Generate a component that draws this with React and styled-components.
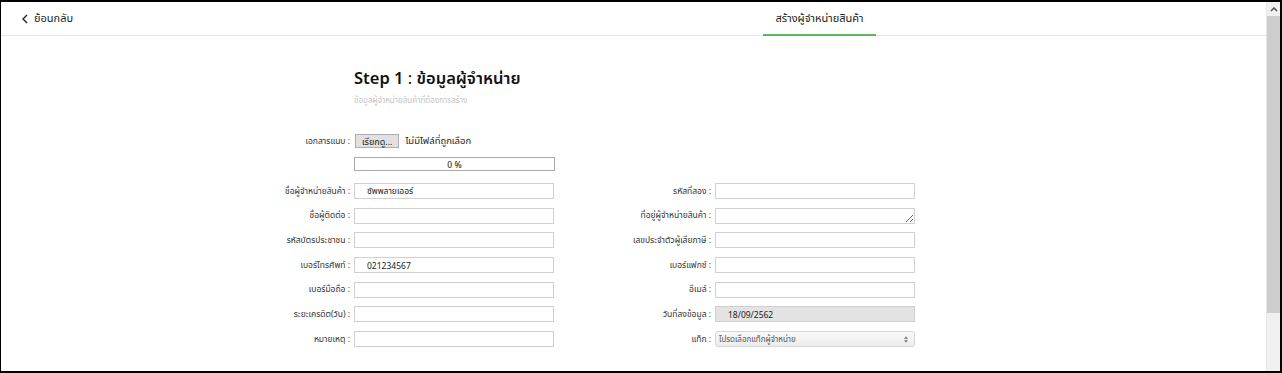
import React from 'react'
import styled, { createGlobalStyle } from 'styled-components'

const GlobalStyle = createGlobalStyle`
  html, body {
    margin: 0;
    padding: 0;
    background: #fff;
    font-family: "Noto Sans", "Noto Sans Thai", Tahoma, sans-serif;
    color: #222;
  }
  * { box-sizing: border-box; }
`

const Frame = styled.div`
  width: 1282px;
  height: 373px;
  border-style: solid;
  border-color: #000;
  border-width: 2px 2px 2px 1px;
  display: flex;
  overflow: hidden;
`

const Main = styled.div`
  flex: 1;
  min-width: 0;
  display: flex;
  flex-direction: column;
`

const Header = styled.div`
  height: 34px;
  border-bottom: 1px solid #e6e6e6;
  display: flex;
  align-items: stretch;
`

const BackLink = styled.a`
  display: flex;
  align-items: center;
  gap: 6px;
  padding-left: 21px;
  font-size: 11px;
  color: #222;
  cursor: pointer;
`

const Tab = styled.div`
  margin-left: auto;
  margin-right: 390px;
  width: 113px;
  display: flex;
  align-items: center;
  justify-content: center;
  font-size: 11px;
  color: #222;
  border-bottom: 2px solid #5cb85c;
  margin-bottom: -1px;
`

const Content = styled.div`
  padding-left: 249px;
`

const TitleBlock = styled.div`
  margin-left: 104px;
  margin-top: 31px;
`

const Title = styled.h1`
  margin: 0;
  font-size: 16.5px;
  line-height: 22px;
  font-weight: 600;
  color: #111;
`

const Colon = styled.span`
  font-weight: 400;
`

const Subtitle = styled.div`
  margin-top: 6px;
  font-size: 8px;
  line-height: 10px;
  color: #c4c4c4;
`

const Row = styled.div`
  display: flex;
  align-items: center;
  gap: 4px;
  margin-top: ${p => p.$mt || 0}px;
  height: 16px;
`

const Label = styled.label`
  width: 100px;
  text-align: right;
  font-size: 8.5px;
  color: #333;
  white-space: nowrap;
`

const FileButton = styled.button`
  height: 14px;
  padding: 0 6px;
  margin-left: 1px;
  font: inherit;
  font-size: 9px;
  color: #222;
  background: #e1e1e1;
  border: 1px solid #adadad;
  border-radius: 0;
`

const FileText = styled.span`
  font-size: 9.5px;
  color: #222;
  margin-left: 2px;
`

const Progress = styled.div`
  margin-top: 8px;
  margin-left: 104px;
  width: 201px;
  height: 14px;
  border: 1px solid #a9a9a9;
  display: flex;
  align-items: center;
  justify-content: center;
  font-size: 8.5px;
  font-weight: 500;
  color: #333;
`

const Grid = styled.div`
  margin-top: 12px;
  display: grid;
  grid-template-columns: 304px 304px;
  column-gap: 57px;
  row-gap: 8.7px;
`

const Input = styled.input`
  width: 200px;
  height: 16px;
  padding: 0 12px;
  font: inherit;
  font-size: 8.5px;
  color: #222;
  border: 1px solid #d0d0d0;
  background: ${p => (p.disabled ? '#e3e3e3' : '#fff')};
  outline: none;
`

const TextArea = styled.textarea`
  width: 200px;
  height: 16px;
  padding: 0 4px;
  font: inherit;
  font-size: 8.5px;
  border: 1px solid #d0d0d0;
  resize: vertical;
  outline: none;
`

const SelectWrap = styled.div`
  position: relative;
  width: 200px;
  height: 16px;
  border: 1px solid #d6d6d6;
  border-radius: 3px;
  background: linear-gradient(#fafafa, #ececec);
  display: flex;
  align-items: center;
  padding-left: 3px;
  font-size: 8px;
  color: #555;
`

const SelectArrow = styled.svg`
  position: absolute;
  right: 6px;
  top: 4px;
`

const Scrollbar = styled.div`
  flex: 0 0 14px;
  width: 14px;
  background: #f0f0f0;
  border-left: 1px solid #e8e8e8;
  display: flex;
  flex-direction: column;
`

const ScrollUp = styled.div`
  height: 14px;
  flex-shrink: 0;
  display: flex;
  align-items: center;
  justify-content: center;
`

const Thumb = styled.div`
  height: 297px;
  flex-shrink: 0;
  background: #cdcdcd;
`

const Field = ({ label, children }) => (
  <Row>
    <Label>{label} :</Label>
    {children}
  </Row>
)

export default function App() {
  return (
    <>
      <GlobalStyle />
      <Frame>
        <Main>
          <Header>
            <BackLink>
              <svg width="6" height="10" viewBox="0 0 6 10">
                <path d="M5 1 L1 5 L5 9" fill="none" stroke="#222" strokeWidth="1.4" />
              </svg>
              ย้อนกลับ
            </BackLink>
            <Tab>สร้างผู้จำหน่ายสินค้า</Tab>
          </Header>
          <Content>
            <TitleBlock>
              <Title>Step 1 <Colon>:</Colon> ข้อมูลผู้จำหน่าย</Title>
              <Subtitle>ข้อมูลผู้จำหน่ายสินค้าที่ต้องการสร้าง</Subtitle>
            </TitleBlock>
            <Row $mt={28}>
              <Label>เอกสารแนบ :</Label>
              <FileButton>เรียกดู...</FileButton>
              <FileText>ไม่มีไฟล์ที่ถูกเลือก</FileText>
            </Row>
            <Progress>0 %</Progress>
            <Grid>
              <Field label="ชื่อผู้จำหน่ายสินค้า"><Input defaultValue="ซัพพลายเออร์" /></Field>
              <Field label="รหัสที่สอง"><Input /></Field>
              <Field label="ชื่อผู้ติดต่อ"><Input /></Field>
              <Field label="ที่อยู่ผู้จำหน่ายสินค้า"><TextArea /></Field>
              <Field label="รหัสบัตรประชาชน"><Input /></Field>
              <Field label="เลขประจำตัวผู้เสียภาษี"><Input /></Field>
              <Field label="เบอร์โทรศัพท์"><Input defaultValue="021234567" /></Field>
              <Field label="เบอร์แฟกซ์"><Input /></Field>
              <Field label="เบอร์มือถือ"><Input /></Field>
              <Field label="อีเมล์"><Input /></Field>
              <Field label="ระยะเครดิต(วัน)"><Input /></Field>
              <Field label="วันที่ลงข้อมูล"><Input disabled defaultValue="18/09/2562" /></Field>
              <Field label="หมายเหตุ"><Input /></Field>
              <Field label="แท็ก">
                <SelectWrap>
                  โปรดเลือกแท็กผู้จำหน่าย
                  <SelectArrow width="4" height="7" viewBox="0 0 4 7">
                    <path d="M0 3 L2 0 L4 3 Z M0 4 L2 7 L4 4 Z" fill="#888" />
                  </SelectArrow>
                </SelectWrap>
              </Field>
            </Grid>
          </Content>
        </Main>
        <Scrollbar>
          <ScrollUp>
            <svg width="8" height="5" viewBox="0 0 8 5">
              <path d="M1 4 L4 1 L7 4" fill="none" stroke="#505050" strokeWidth="1.5" />
            </svg>
          </ScrollUp>
          <Thumb />
        </Scrollbar>
      </Frame>
    </>
  )
}
